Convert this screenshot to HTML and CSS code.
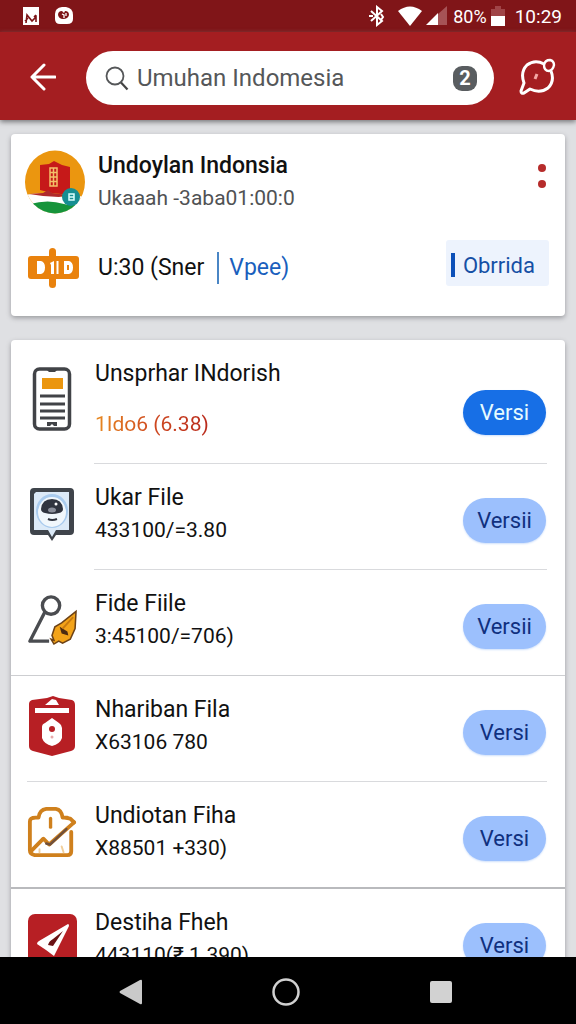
FILE: index.html
```html
<!DOCTYPE html>
<html lang="id">
<head>
<meta charset="utf-8">
<meta name="viewport" content="width=device-width, initial-scale=1">
<title>Umuhan Indomesia</title>
<link rel="stylesheet" href="styles.css">
</head>
<body>
<div class="status">
  <div class="status-group">
    <svg width="18" height="20" viewBox="0 0 18 20"><path fill="#fff" d="M1 1h16v18H1z"/><path d="M4 17l1-8 5 6 4-4v5M3 15l3-3M12 11l2-2" fill="none" stroke="#7c1417" stroke-width="1.600"/></svg>
    <svg width="20" height="20" viewBox="0 0 20 20"><path fill="#fff" d="M8 1h4q7 1 7 8v4q0 5-6 5H6q-5 0-5-5V8q0-6 7-7z"/><path fill="#7c1417" d="M8 5q-4 0-4 4 1 4 5 4 5 0 6-4 0-4-4-4l-1 2z"/><path d="M8 8l2 1v3M12 7v3" fill="none" stroke="#fff" stroke-width="1.300"/></svg>
  </div>
  <div class="status-group status-end">
    <svg width="18" height="22" viewBox="0 0 18 22"><path d="M3 6l11 10-5 4V2l5 4L3 16M1 11h4M13 9l2 3-2 3" fill="none" stroke="#fff" stroke-width="2"/></svg>
    <svg width="24" height="20" viewBox="0 0 24 20"><path fill="#fff" d="M0 5Q12-4 24 5L12 20z"/></svg>
    <svg width="23" height="20" viewBox="0 0 23 20"><path fill="#a65356" d="M12 8l9-8v19h-9z"/><path fill="#fff" d="M0 19L12 7v12z"/></svg>
    <span class="battery-text">80%</span>
    <svg width="14" height="20" viewBox="0 0 14 20"><path fill="#a04447" d="M4 0h6v3h4v8H0V3h4z"/><path fill="#fff" d="M0 10h14v10H0z"/></svg>
    <span class="clock">10:29</span>
  </div>
</div>

<header class="appbar">
  <button class="icon-btn" aria-label="Kembali">
    <svg width="28" height="30" viewBox="0 0 28 30"><path d="M16 3L4 15l12 12M4 15h23" fill="none" stroke="#fff" stroke-width="3" stroke-linejoin="round" stroke-linecap="round"/></svg>
  </button>
  <div class="search">
    <svg width="24" height="25" viewBox="0 0 24 25"><circle cx="10" cy="10" r="8.500" fill="none" stroke="#555759" stroke-width="1.800"/><path d="M16 16.500l6.500 7" stroke="#444" stroke-width="2.200"/></svg>
    <input class="search-input" type="text" aria-label="Cari" value="Umuhan Indomesia">
    <span class="badge">2</span>
  </div>
  <button class="icon-btn" aria-label="Pesan">
    <svg width="38" height="38" viewBox="0 0 38 38" fill="none" stroke="#fff" stroke-width="3" stroke-linejoin="round"><path d="M26 6Q17 1 9 7 2 14 6 25L3 33q0 3 3 2l6-4q10 5 18-1 7-7 3-17"/><path d="M26 7q1-5 6-5 4 1 4 5-1 5-5 6-5 0-5-6z" stroke-width="2.400"/><path d="M19 16l-2 5" stroke="#f4a8a4"/></svg>
  </button>
</header>

<main class="content">
  <section class="card profile">
    <div class="profile-head">
      <svg class="avatar" width="60" height="64" viewBox="0 0 60 64">
        <clipPath id="disc"><ellipse cx="30" cy="32" rx="30" ry="31.500"/></clipPath>
        <g clip-path="url(#disc)">
          <path fill="#eb960f" d="M0 0h60v64H0z"/>
          <path fill="#fff" d="M0 45q12-3 24 0t36 1v18H0z"/>
          <path fill="#16943b" d="M5 54q18-5 34 0 8 2 14 0v10H5z"/>
          <path fill="#c61919" d="M15 15l9-1 5-3 8 4 8 2v28l-18-2-12-3z"/>
          <path fill="#b02a2c" d="M4 44l14-1 5-3 4 3 15 2-8 2-16-1z"/>
          <path d="M25 18h7v18h-7zM28.500 18v18M25 22.500h7M25 27h7M25 31.500h7" fill="none" stroke="#f3c169" stroke-width="1.500"/>
        </g>
        <circle cx="46" cy="47" r="9" fill="#168e92"/>
        <path d="M44 44h5v6h-5zM44 47h5" fill="none" stroke="#d9ffff" stroke-width="1.500"/>
      </svg>
      <div class="texts">
        <h1 class="title strong">Undoylan Indonsia</h1>
        <p class="sub muted">Ukaaah -3aba01:00:0</p>
      </div>
      <button class="more" aria-label="Menu"><i class="dot"></i><i class="dot"></i></button>
    </div>
    <div class="profile-info">
      <svg class="ticket" width="52" height="40" viewBox="0 0 52 40"><rect y="8" width="51" height="23" rx="3" fill="#e9820d"/><rect x="21" width="7" height="40" rx="3.500" fill="#e9820d"/><path fill="#fff" d="M9 13h4q4 1 4 6.500T13 26H9zM36 13h5q4 1 4 6.500T41 26h-5zM22 15l4-2v13h-3v-9z"/><path d="M29.500 13v13" stroke="#fff" stroke-width="2"/><path d="M40 17v5" stroke="#e9820d" stroke-width="2"/></svg>
      <p class="title hours">U:30 (Sner</p>
      <a class="title link" href="#">Vpee)</a>
      <button class="chip">Obrrida</button>
    </div>
  </section>

  <ul class="card list">
    <li class="item inset featured">
      <div class="row">
        <svg class="icon" width="50" height="64" viewBox="0 0 50 64"><rect x="7.500" y="2" width="35" height="60" rx="5" fill="#fff" stroke="#414347" stroke-width="3.500"/><path fill="#414347" d="M19 2h12l-3 3h-6zM20 55h10v4h-3l-2-2-2 2h-3z"/><path fill="#eb960f" d="M15 11h21v11H15z"/><path d="M13 29h25M13 37h25M13 44h25M13 51h25" stroke="#414347" stroke-width="2.800"/></svg>
        <div class="texts"><h2 class="title">Unsprhar INdorish</h2><p class="sub"><span class="size">1Ido6 (6.38)</span></p></div>
        <button class="pill primary">Versi</button>
      </div>
    </li>
    <li class="item inset">
      <div class="row">
        <svg class="icon" width="50" height="54" viewBox="0 0 50 54"><path fill="#3f444b" d="M7 1h36q4 0 4 4v39q0 4-4 4H29l-4 6-4-6H7q-4 0-4-4V5q0-4 4-4z"/><path fill="#dceaf8" d="M9 5h33v38H29l-4 7-4-7H7V7z"/><ellipse cx="25" cy="24" rx="16" ry="17" fill="#a9cbee"/><ellipse cx="25" cy="25" rx="14" ry="15" fill="#f1f7fc"/><path fill="#30343f" d="M14 22q1-10 11-10t11 10q0 3-4 4-7 2-14 0-4-1-4-4z"/><ellipse cx="25" cy="23" rx="4" ry="2.500" fill="#8b8f9b"/><circle cx="29" cy="17" r="1.500" fill="#fff"/><path d="M21 32q4 2 9 0" fill="none" stroke="#30343f" stroke-width="2"/></svg>
        <div class="texts"><h2 class="title">Ukar File</h2><p class="sub">433100/=3.80</p></div>
        <button class="pill">Versii</button>
      </div>
    </li>
    <li class="item full">
      <div class="row">
        <svg class="icon" width="52" height="54" viewBox="0 0 52 54"><circle cx="25" cy="12" r="9" fill="none" stroke="#4a4c50" stroke-width="3.500"/><path d="M19 18L3 49h20" fill="none" stroke="#4a4c50" stroke-width="3.500" stroke-linejoin="round"/><path d="M51 18L36 30l-7 4-3 9 2 5-3-1 3 5 5-3 4 2 8-4 5-11z" fill="#f3a319" stroke="#6d4216" stroke-width="1.600"/><path fill="#4c2b12" d="M34 34l8 5 1 4-7-2z"/><path d="M48 24L37 36" stroke="#c87a10" stroke-width="2"/></svg>
        <div class="texts"><h2 class="title">Fide Fiile</h2><p class="sub">3:45100/=706)</p></div>
        <button class="pill">Versii</button>
      </div>
    </li>
    <li class="item wide">
      <div class="row">
        <svg class="icon" width="50" height="60" viewBox="0 0 50 60"><path fill="#b71f24" d="M5 4l15-2 6-2 6 2 13 2q3 1 3 5v41q0 4-4 5l-19 5-19-5q-4-1-4-5V8q0-3 3-4z"/><path fill="#fff" d="M8 12h34v5H8zM18 9l7-6 4 1 3 5zM25 22l7 5q3 2 3 5v10q-2 6-10 8-8-2-10-8V31q0-3 3-4z"/><circle cx="25" cy="33" r="3" fill="#b71f24"/><circle cx="25" cy="41" r="1.500" fill="#e7a9aa"/></svg>
        <div class="texts"><h2 class="title">Nhariban Fila</h2><p class="sub">X63106 780</p></div>
        <button class="pill">Versi</button>
      </div>
    </li>
    <li class="item full dark">
      <div class="row">
        <svg class="icon" width="52" height="54" viewBox="0 0 52 54" fill="none" stroke="#cf801d" stroke-width="4" stroke-linejoin="round" stroke-linecap="round"><path d="M39 12l6 1 4 4M46 27v20q0 4-4 4H8q-5-1-5-5V16q0-4 6-4h3q1-8 8-9h10q6 1 7 9h5"/><path d="M5 46l12-12 6 6 26-23"/><path d="M20 39l4 1 17-16" stroke="#70503b" stroke-width="2.500"/><path d="M24.500 13v9" stroke-width="3.500"/><path d="M13 48v-3M38 48l-2-6" stroke="#f1cf9b" stroke-width="2"/></svg>
        <div class="texts"><h2 class="title">Undiotan Fiha</h2><p class="sub">X88501 +330)</p></div>
        <button class="pill">Versi</button>
      </div>
    </li>
    <li class="item">
      <div class="row">
        <svg class="icon" width="50" height="50" viewBox="0 0 50 50"><rect x="1" width="49" height="50" rx="7" fill="#b71f24"/><path fill="#fff" d="M41 10q1 0 1 2L27 42l-8-6-9-6q0-2 2-3z"/><path fill="#6a1215" d="M36 17L26 32l-5-1q1-4 5-6z"/></svg>
        <div class="texts"><h2 class="title">Destiha Fheh</h2><p class="sub">443110(₹ 1.390)</p></div>
        <button class="pill">Versi</button>
      </div>
    </li>
  </ul>
</main>

<nav class="navbar">
  <button class="nav-btn" aria-label="Kembali"><svg width="24" height="26" viewBox="0 0 24 26"><path fill="#c9c9c9" d="M21 1q2-1 2 1v22q0 2-2 1L1 14q-1-1 0-2z"/></svg></button>
  <button class="nav-btn" aria-label="Beranda"><svg width="30" height="30" viewBox="0 0 30 30"><circle cx="15" cy="15" r="12.500" fill="none" stroke="#d0d0d0" stroke-width="2.500"/></svg></button>
  <button class="nav-btn" aria-label="Terbaru"><svg width="22" height="22" viewBox="0 0 22 22"><rect width="22" height="22" rx="2" fill="#d2d2d2"/></svg></button>
</nav>
</body>
</html>
```
FILE: styles.css
```css
* { box-sizing: border-box; }

body {
  margin: 0;
  height: 100vh;
  display: flex;
  flex-direction: column;
  overflow: hidden;
  background: #dfe0e3;
  color: #111;
  font-family: Roboto, "Liberation Sans", sans-serif;
}

button {
  padding: 0;
  border: 0;
  background: none;
  font: inherit;
  color: inherit;
}

svg { flex: none; display: block; }
h1, h2, p, ul { margin: 0; padding: 0; }

.status {
  flex: none;
  height: 32px;
  padding: 0 14px 0 22px;
  display: flex;
  align-items: center;
  justify-content: space-between;
  background: #801518;
  color: #fff;
}
.status-group { display: flex; align-items: center; gap: 14px; }
.status-end { gap: 4px; }
.status-end svg:first-child { margin-right: 8px; }
.battery-text { font-size: 18px; }
.clock { font-size: 19px; margin-left: 6px; }

.appbar {
  flex: none;
  height: 88px;
  padding: 0 20px 0 28px;
  display: flex;
  align-items: center;
  background: #a41e21;
  box-shadow: 0 2px 5px #77777a;
  z-index: 1;
}
.icon-btn { margin-top: 2px; }
.search {
  flex: 1;
  min-width: 0;
  height: 54px;
  margin: 4px 24px 0 30px;
  padding: 0 17px 0 19px;
  display: flex;
  align-items: center;
  gap: 8px;
  border-radius: 27px;
  background: #fff;
}
.search-input {
  flex: 1;
  min-width: 0;
  padding: 0;
  border: 0;
  outline: 0;
  background: none;
  color: #555759;
  font: 24px Roboto, "Liberation Sans", sans-serif;
}
.badge {
  width: 24px;
  height: 25px;
  border-radius: 9px;
  background: #595d60;
  color: #fff;
  font-size: 20px;
  font-weight: 700;
  line-height: 25px;
  text-align: center;
}

.content {
  flex: 1;
  min-height: 0;
  overflow: hidden;
  padding: 14px 11px 0;
}
.card {
  border-radius: 4px;
  background: #fff;
  box-shadow: 0 2px 5px #9a9b9f;
}

.title { font-size: 23px; font-weight: 400; line-height: 32px; white-space: nowrap; }
.strong { font-weight: 500; }
.sub { font-size: 21px; line-height: 32px; white-space: nowrap; }
.muted { color: #505254; }
.texts { flex: 1; min-width: 0; }

.profile { padding: 16px 16px 20px 14px; }
.profile-head { display: flex; align-items: center; gap: 13px; }
.more {
  display: flex;
  flex-direction: column;
  gap: 8px;
  padding: 0 3px 13px;
}
.dot { width: 8px; height: 8px; border-radius: 50%; background: #b62c2b; }
.profile-info {
  min-height: 56px;
  margin-top: 26px;
  display: flex;
  align-items: center;
}
.ticket { margin: 0 18px 0 3px; }
.link {
  margin-left: 13px;
  padding-left: 10px;
  border-left: 2px solid #4a86c5;
  color: #1a5fbd;
  text-decoration: none;
}
.chip {
  align-self: flex-start;
  margin-left: auto;
  height: 46px;
  padding: 4px 14px 0 5px;
  display: flex;
  align-items: center;
  gap: 8px;
  border-radius: 3px;
  background: #edf3fd;
  color: #154fa5;
  font-size: 22px;
}
.chip::before { content: ""; width: 4px; height: 24px; background: #0d50b8; }

.list { margin-top: 24px; list-style: none; }
.row {
  display: flex;
  align-items: center;
  gap: 18px;
  padding: 18px 19px 23px 16px;
}
.icon { width: 50px; overflow: visible; }
.item::after { content: ""; display: block; height: 1px; background: #d9dadd; }
.inset::after { margin: 0 18px 0 83px; }
.wide::after { margin: 0 18px 0 16px; }
.full::after { background: #cdced1; }
.dark::after { height: 2px; background: #b9babd; }
.featured .sub { margin-top: 18px; }
.size {
  background: linear-gradient(90deg, #e88a20, #cf4a20 50%, #b92a1c);
  background-clip: text;
  color: transparent;
}
.pill {
  flex: none;
  width: 83px;
  height: 45px;
  margin-top: 12px;
  border-radius: 23px;
  background: #9cc0fd;
  color: #10307f;
  font-size: 22px;
  box-shadow: 0 1px 2px #cfe0fb;
}
.primary { margin-top: 26px; background: #176fe6; color: #e6fbff; }

.navbar {
  flex: none;
  height: 67px;
  padding: 2px 58px 0 54px;
  display: flex;
  align-items: center;
  background: #000;
  z-index: 1;
}
.nav-btn { flex: 1; display: flex; justify-content: center; }
```
